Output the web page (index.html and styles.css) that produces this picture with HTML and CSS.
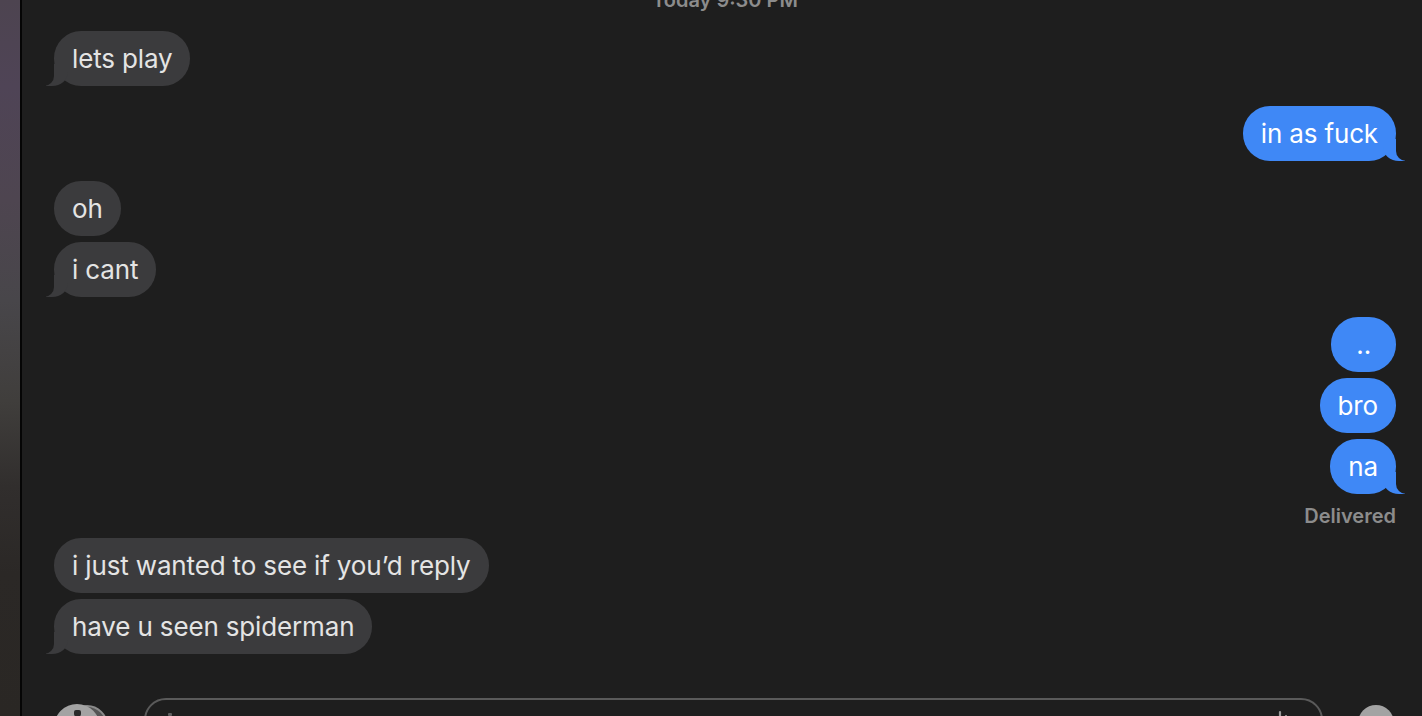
FILE: index.html
```html
<!DOCTYPE html>
<html>
<head>
<meta charset="utf-8">
<link rel="stylesheet" href="styles.css">
</head>
<body>
<div class="sidebar"></div>
<div class="divider"></div>
<main class="main">
  <div class="thread">
    <div class="timestamp">Today 9:30 PM</div>
    <div class="row them first"><div class="bubble tail">lets play</div></div>
    <div class="row me group"><div class="bubble tail">in as fuck</div></div>
    <div class="row them group"><div class="bubble">oh</div></div>
    <div class="row them"><div class="bubble tail">i cant</div></div>
    <div class="row me group"><div class="bubble dots">..</div></div>
    <div class="row me"><div class="bubble">bro</div></div>
    <div class="row me"><div class="bubble tail">na</div></div>
    <div class="delivered">Delivered</div>
    <div class="row them after-status"><div class="bubble">i just wanted to see if you’d reply</div></div>
    <div class="row them"><div class="bubble tail">have u seen spiderman</div></div>
  </div>
  <div class="composer">
    <div class="apps">
      <div class="apps-back"></div>
      <div class="apps-front"><span class="apps-mark"></span></div>
    </div>
    <div class="field">
      <span class="caret"></span>
      <svg class="wave" width="24" height="30" viewBox="0 0 24 30">
        <g stroke="#9a9a9a" stroke-width="2.2" stroke-linecap="round">
          <line x1="3" y1="14" x2="3" y2="22"/>
          <line x1="9" y1="6" x2="9" y2="28"/>
          <line x1="15" y1="10" x2="15" y2="26"/>
          <line x1="21" y1="14" x2="21" y2="22"/>
        </g>
      </svg>
    </div>
    <div class="emoji"></div>
  </div>
</main>
</body>
</html>
```
FILE: styles.css
```css
html, body {
  margin: 0;
  padding: 0;
  height: 716px;
  overflow: hidden;
  background: #1e1e1e;
}
body {
  display: flex;
  font-family: Inter, "Noto Sans", "Liberation Sans", sans-serif;
}
.sidebar {
  width: 20px;
  flex: none;
  background: linear-gradient(180deg, #4d4450 0%, #4f4456 12%, #4e4550 28%, #48464a 42%, #403e3c 56%, #312e2d 68%, #2b2826 80%, #2a2724 100%);
}
.divider {
  width: 2px;
  flex: none;
  background: #050505;
}
.main {
  flex: 1;
  display: flex;
  flex-direction: column;
  min-width: 0;
}
.thread {
  padding: 0 26px 0 32px;
  display: flex;
  flex-direction: column;
}
.timestamp {
  margin-top: -11px;
  height: 22px;
  text-align: center;
  font-size: 20px;
  font-weight: 600;
  color: #8c8c8c;
  line-height: 22px;
}
.row {
  display: flex;
  margin-top: 6px;
}
.row.first { margin-top: 20px; }
.row.group { margin-top: 20px; }
.row.after-status { margin-top: 11px; }
.row.me { justify-content: flex-end; }
.bubble {
  position: relative;
  height: 55px;
  box-sizing: border-box;
  padding: 13px 18px 12px;
  font-size: 26px;
  line-height: 30px;
  border-radius: 27px;
  white-space: nowrap;
  letter-spacing: -0.15px;
}
.bubble.dots {
  padding-left: 25px;
  padding-right: 25px;
}
.them .bubble {
  background: #3b3b3d;
  color: #e4e4e4;
}
.me .bubble {
  background: #3f88f6;
  color: #ffffff;
}
.bubble.tail::before,
.bubble.tail::after {
  content: "";
  position: absolute;
  bottom: 0;
  height: 22px;
}
.them .bubble.tail::before {
  left: -8px;
  width: 22px;
  background: #3b3b3d;
  border-bottom-right-radius: 16px 14px;
}
.them .bubble.tail::after {
  left: -12px;
  width: 12px;
  background: #1e1e1e;
  border-bottom-right-radius: 10px;
}
.me .bubble.tail::before {
  right: -9px;
  width: 22px;
  background: #3f88f6;
  border-bottom-left-radius: 16px 14px;
}
.me .bubble.tail::after {
  right: -13px;
  width: 13px;
  background: #1e1e1e;
  border-bottom-left-radius: 10px;
}
.delivered {
  align-self: flex-end;
  margin-top: 11px;
  font-size: 20px;
  font-weight: 600;
  color: #8c8c8c;
  line-height: 22px;
}
.composer {
  display: flex;
  align-items: flex-start;
  padding: 0 28px 0 32px;
  margin-top: 44px;
}
.apps {
  position: relative;
  width: 54px;
  height: 46px;
  flex: none;
  margin-top: 6px;
}
.apps-back {
  position: absolute;
  left: 12px;
  top: 1px;
  width: 42px;
  height: 42px;
  border-radius: 50%;
  background: #555;
  border: 2px solid #8a8a8a;
  box-sizing: border-box;
}
.apps-front {
  position: absolute;
  left: 0;
  top: 0;
  width: 46px;
  height: 46px;
  border-radius: 50%;
  background: #a3a3a3;
}
.apps-mark {
  position: absolute;
  left: 20px;
  top: 6px;
  width: 7px;
  height: 7px;
  background: #2a2a2a;
  border-radius: 2px 2px 50% 50%;
}
.field {
  flex: 1;
  margin-left: 36px;
  height: 44px;
  border: 2px solid #5a5a5a;
  border-radius: 22px;
  box-sizing: border-box;
  display: flex;
  align-items: flex-start;
  justify-content: space-between;
  padding: 0 26px 0 22px;
}
.caret {
  width: 4px;
  height: 3px;
  margin-top: 13px;
  background: #5f5f5f;
  border-radius: 1px;
}
.wave {
  margin-top: 6px;
}
.emoji {
  flex: none;
  width: 36px;
  height: 36px;
  border-radius: 50%;
  background: #a3a3a3;
  margin-left: 35px;
  margin-top: 7px;
}
```
